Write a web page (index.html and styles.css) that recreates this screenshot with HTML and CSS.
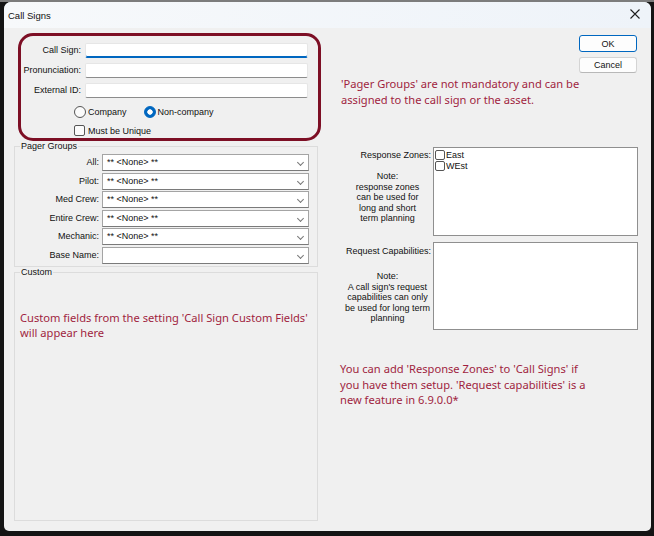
FILE: index.html
```html
<!DOCTYPE html>
<html lang="en">
<head>
    <meta charset="UTF-8">
    <title>Call Signs</title>
    <link rel="stylesheet" href="styles.css">
</head>
<body>
    <div class="window">
        <div class="titlebar">
            <span class="title">Call Signs</span>
            <svg class="close" width="10" height="10" viewBox="0 0 10 10">
                <path d="M0.5 0.5 L9.5 9.5 M9.5 0.5 L0.5 9.5" stroke="#1f1f1f" stroke-width="1.1" fill="none"/>
            </svg>
        </div>
        <div class="content">
            <div class="left">
                <div class="highlight">
                    <div class="fields">
                        <label>Call Sign:</label><div class="input focused"></div>
                        <label>Pronunciation:</label><div class="input"></div>
                        <label>External ID:</label><div class="input"></div>
                    </div>
                    <div class="options">
                        <span class="option"><span class="radio"></span>Company</span>
                        <span class="option"><span class="radio checked"></span>Non-company</span>
                    </div>
                    <div class="unique"><span class="check"></span>Must be Unique</div>
                </div>

                <fieldset class="group pager">
                    <legend>Pager Groups</legend>
                    <div class="combos">
                        <label>All:</label><div class="combo">** &lt;None&gt; **<span class="chev"></span></div>
                        <label>Pilot:</label><div class="combo">** &lt;None&gt; **<span class="chev"></span></div>
                        <label>Med Crew:</label><div class="combo">** &lt;None&gt; **<span class="chev"></span></div>
                        <label>Entire Crew:</label><div class="combo">** &lt;None&gt; **<span class="chev"></span></div>
                        <label>Mechanic:</label><div class="combo">** &lt;None&gt; **<span class="chev"></span></div>
                        <label>Base Name:</label><div class="combo"><span class="chev"></span></div>
                    </div>
                </fieldset>

                <fieldset class="group custom">
                    <legend>Custom</legend>
                    <p class="remark custom-note">Custom fields from the setting 'Call Sign Custom Fields'<br>will appear here</p>
                </fieldset>
            </div>

            <div class="right">
                <div class="buttons">
                    <button class="default">OK</button>
                    <button>Cancel</button>
                </div>
                <p class="remark pager-note">'Pager Groups' are not mandatory and can be<br>assigned to the call sign or the asset.</p>

                <div class="listrow zones">
                    <div class="side">
                        <div class="side-label">Response Zones:</div>
                        <div class="side-note">Note:<br>response zones<br>can be used for<br>long and short<br>term planning</div>
                    </div>
                    <div class="listbox">
                        <div class="item"><span class="box"></span>East</div>
                        <div class="item"><span class="box"></span>WEst</div>
                    </div>
                </div>

                <div class="listrow caps">
                    <div class="side">
                        <div class="side-label">Request Capabilities:</div>
                        <div class="side-note">Note:<br>A call sign's request<br>capabilities can only<br>be used for long term<br>planning</div>
                    </div>
                    <div class="listbox"></div>
                </div>

                <p class="remark bottom-note">You can add 'Response Zones' to 'Call Signs' if<br>you have them setup. 'Request capabilities' is a<br>new feature in 6.9.0.0*</p>
            </div>
        </div>
    </div>
</body>
</html>
```

FILE: styles.css
```css
body {
    margin: 0;
    background: linear-gradient(#7c7c7c 0, #7c7c7c 2px, #141414 2px);
    font-family: "Liberation Sans", Arial, sans-serif;
    font-size: 9px;
    color: #111;
    height: 536px;
    overflow: hidden;
}
.window {
    margin: 2px 0 0 4px;
    width: 647px;
    height: 529px;
    background: #f0f0f0;
    border-radius: 7px 7px 5px 5px;
    overflow: hidden;
}
.titlebar {
    height: 26px;
    display: flex;
    align-items: center;
    justify-content: space-between;
    padding: 0 11px 0 4px;
    background: linear-gradient(to right, #f7f9fb, #eef3f9);
}
.title { font-size: 9.5px; }
.close { margin-top: -3px; }

.content {
    display: flex;
    padding-left: 10px;
}
.left { width: 306px; }
.right {
    width: 310px;
    margin-left: 10px;
}

/* red frame round the main fields */
.highlight {
    box-sizing: border-box;
    margin: 5px 0 0 4px;
    width: 303px;
    height: 108px;
    border: 3px solid #7d0f25;
    border-radius: 15px;
}
.fields {
    display: grid;
    grid-template-columns: 60px 223px;
    grid-auto-rows: 15px;
    column-gap: 4px;
    row-gap: 5px;
    padding-top: 7px;
}
.fields label, .combos label {
    text-align: right;
    line-height: 15px;
}
.input {
    box-sizing: border-box;
    background: #fff;
    border: 1px solid #e6e6e6;
    border-bottom-color: #8c8c8c;
    border-radius: 2px;
}
.input.focused {
    border-bottom-color: #0067c0;
    box-shadow: inset 0 -1px 0 #0067c0;
}
.options {
    display: flex;
    gap: 17px;
    margin-top: 7px;
    padding-left: 53px;
    height: 13px;
}
.option, .unique {
    display: flex;
    align-items: center;
    gap: 2px;
}
.radio {
    box-sizing: border-box;
    width: 12px;
    height: 12px;
    border: 1px solid #555;
    border-radius: 50%;
    background: #fbfbfb;
}
.radio.checked {
    border-color: #0067c0;
    background: radial-gradient(circle, #fff 0, #fff 2.4px, #0067c0 3px);
}
.unique {
    margin-top: 6px;
    padding-left: 53px;
    height: 13px;
}
.check {
    box-sizing: border-box;
    width: 11px;
    height: 11px;
    border: 1px solid #555;
    border-radius: 2px;
    background: #fbfbfb;
    margin-right: 1px;
}

/* group boxes */
.group {
    box-sizing: border-box;
    width: 304px;
    margin: 1px 0 0;
    padding: 0;
    border: 1px solid #dcdcdc;
    min-width: 0;
}
.group legend {
    margin-left: 5px;
    padding: 0 1px;
    line-height: 9px;
    font-size: 9px;
}
.combos {
    display: grid;
    grid-template-columns: 84px 207px;
    grid-auto-rows: 17px;
    column-gap: 3px;
    row-gap: 1.6px;
    padding: 3px 0 2px;
}
.combos label { line-height: 17px; }
.combo {
    box-sizing: border-box;
    position: relative;
    background: #fff;
    border: 1px solid #a4a4a4;
    border-bottom-color: #7a7a7a;
    padding-left: 4px;
    line-height: 15px;
}
.chev {
    position: absolute;
    right: 5px;
    top: 5px;
    width: 4px;
    height: 4px;
    border-right: 1px solid #777;
    border-bottom: 1px solid #777;
    transform: rotate(45deg);
}
.custom { height: 253px; }

.remark {
    margin: 0;
    font-family: "Noto Sans", "Open Sans", sans-serif;
    font-size: 11.15px;
    line-height: 15.5px;
    color: #a01f3f;
    white-space: nowrap;
}
.custom-note {
    margin: 33px 0 0 5px;
}

/* right side */
.buttons {
    display: flex;
    flex-direction: column;
    align-items: flex-end;
    gap: 5px;
    padding: 7px 3px 0 0;
}
.buttons button {
    box-sizing: border-box;
    width: 58px;
    height: 16px;
    padding: 0;
    font-family: "Liberation Sans", Arial, sans-serif;
    font-size: 9px;
    color: #111;
    background: #fdfdfd;
    border: 1px solid #d4d4d4;
    border-bottom-color: #b8b8b8;
    border-radius: 3px;
}
.buttons button.default {
    height: 17px;
    border: 1px solid #0067c0;
}
.pager-note { margin: 3px 0 0 11px; }

.listrow {
    display: grid;
    grid-template-columns: 101px 205px;
    column-gap: 2px;
}
.zones { margin-top: 40px; }
.caps { margin-top: 6px; }
.side-label {
    text-align: right;
    line-height: 10.5px;
}
.zones .side-label { padding-top: 3px; }
.caps .side-label { padding-top: 4px; }
.side-note {
    margin-left: 14px;
    text-align: center;
    line-height: 10.5px;
}
.zones .side-note { margin-top: 10.5px; }
.caps .side-note { margin-top: 14.5px; }
.listbox {
    box-sizing: border-box;
    background: #fff;
    border: 1px solid #8f8f8f;
    padding: 2px 0 0 1px;
}
.zones .listbox { height: 89px; }
.caps .listbox { height: 88px; }
.item {
    display: flex;
    align-items: center;
    height: 10.5px;
}
.box {
    box-sizing: border-box;
    width: 10px;
    height: 10px;
    border: 1px solid #555;
    border-radius: 2px;
    margin-right: 1px;
}
.bottom-note { margin: 31px 0 0 10px; }
```
